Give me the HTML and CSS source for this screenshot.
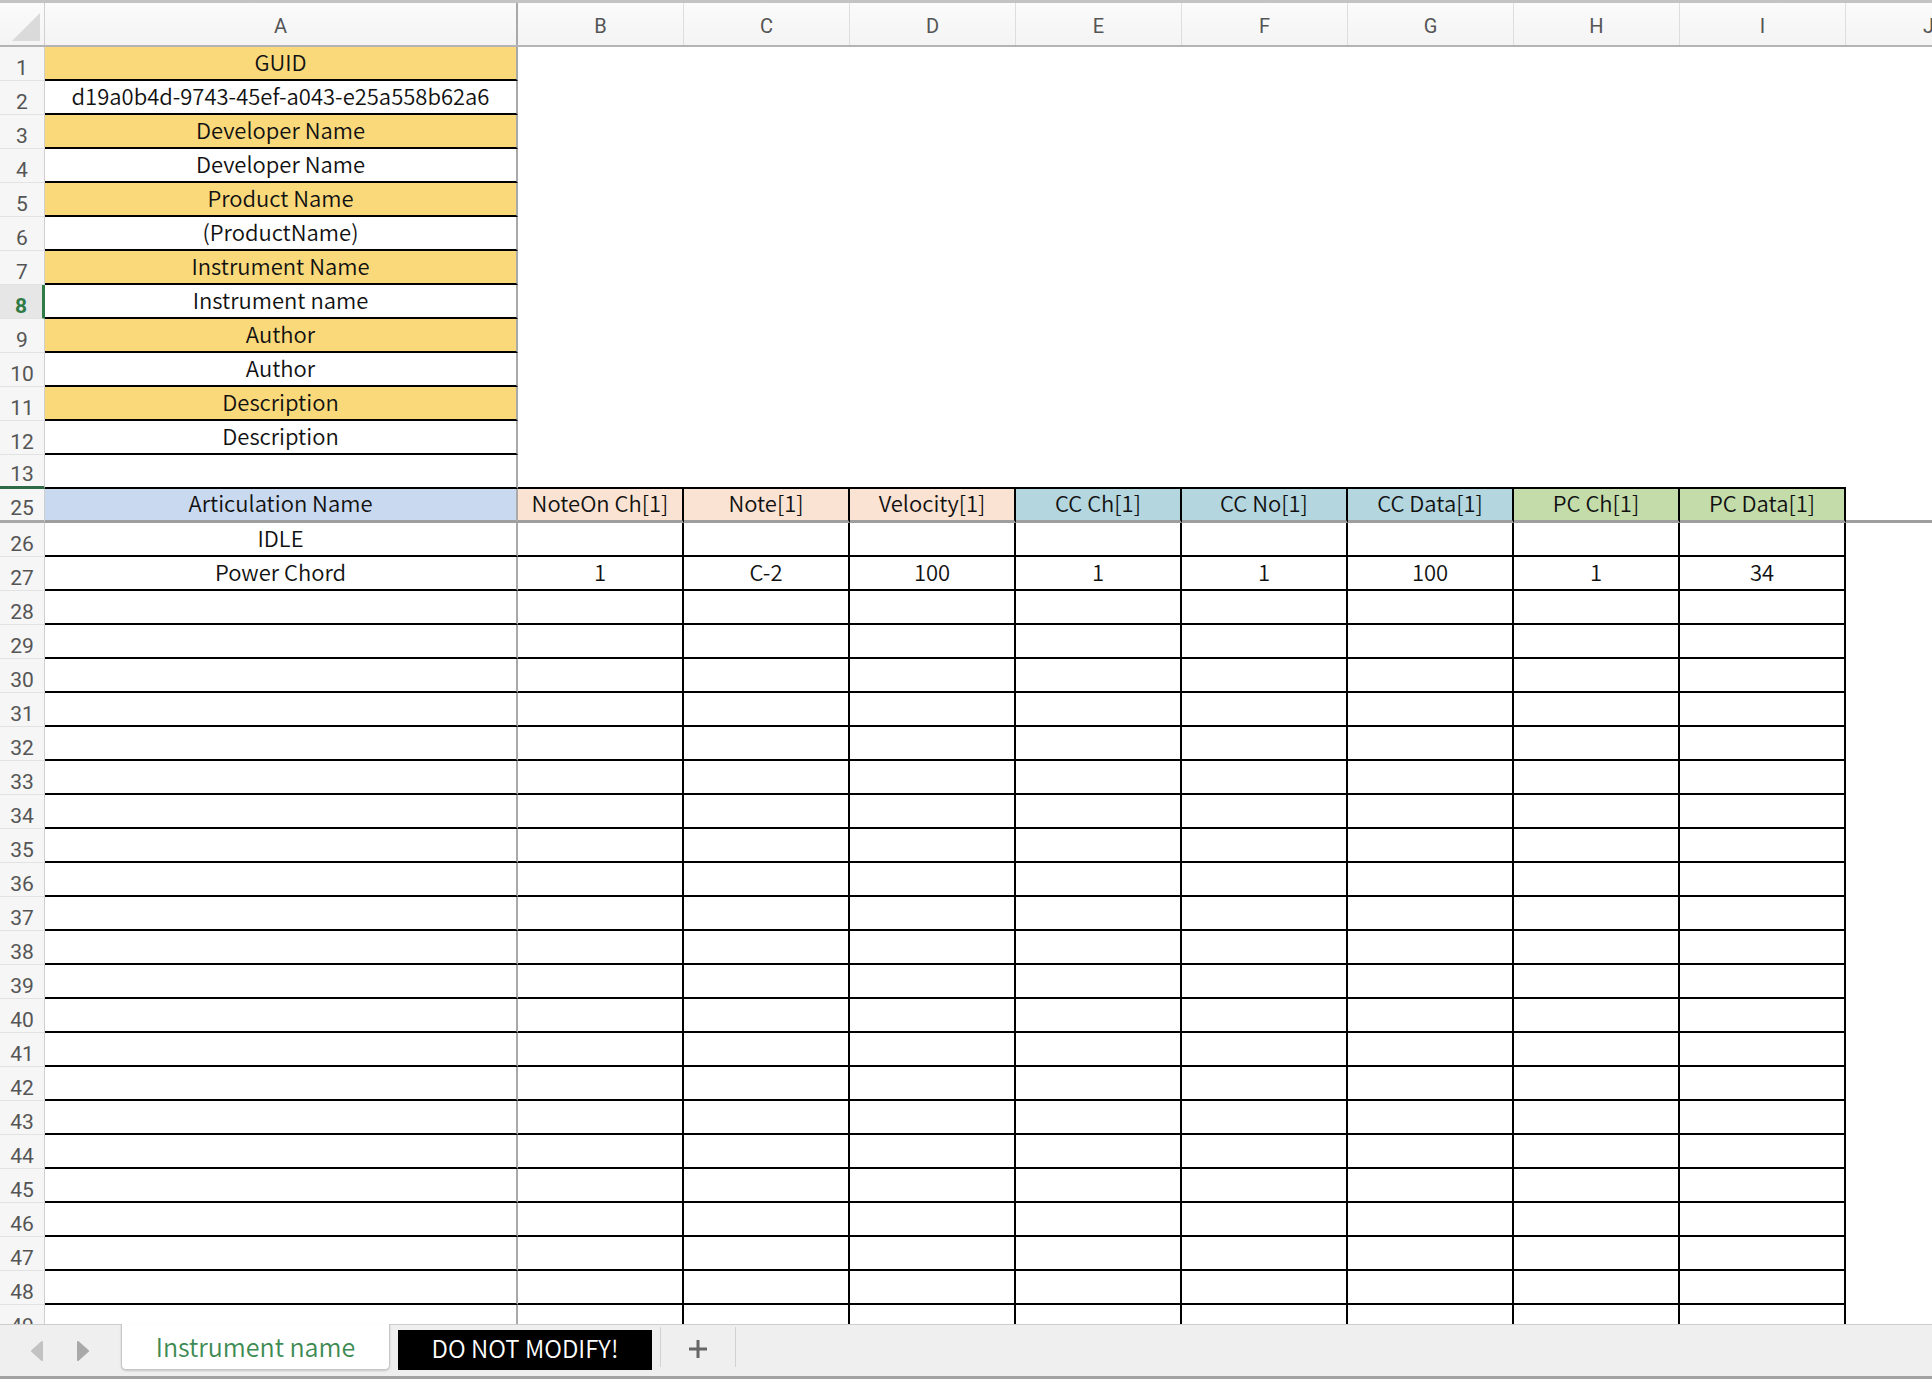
FILE: index.html
```html
<!DOCTYPE html>
<html lang="en">
<head>
<meta charset="utf-8">
<title>Instrument name</title>
<link rel="stylesheet" href="styles.css">
</head>
<body>
<div class="app">
  <div class="sheet">
    <div class="row colhead">
      <div class="corner"><svg width="34" height="34" viewBox="0 0 34 34"><polygon points="4,32 32,32 32,4" fill="#dadada"/></svg></div>
      <div class="ch cha">A</div>
      <div class="ch">B</div>
      <div class="ch">C</div>
      <div class="ch">D</div>
      <div class="ch">E</div>
      <div class="ch">F</div>
      <div class="ch">G</div>
      <div class="ch">H</div>
      <div class="ch">I</div>
      <div class="ch">J</div>
    </div>

    <div class="row"><div class="rh">1</div><div class="c ca y">GUID</div><div class="rest"></div></div>
    <div class="row"><div class="rh">2</div><div class="c ca">d19a0b4d-9743-45ef-a043-e25a558b62a6</div><div class="rest"></div></div>
    <div class="row"><div class="rh">3</div><div class="c ca y">Developer Name</div><div class="rest"></div></div>
    <div class="row"><div class="rh">4</div><div class="c ca">Developer Name</div><div class="rest"></div></div>
    <div class="row"><div class="rh">5</div><div class="c ca y">Product Name</div><div class="rest"></div></div>
    <div class="row"><div class="rh">6</div><div class="c ca">(ProductName)</div><div class="rest"></div></div>
    <div class="row"><div class="rh">7</div><div class="c ca y">Instrument Name</div><div class="rest"></div></div>
    <div class="row"><div class="rh rh-active">8</div><div class="c ca">Instrument name</div><div class="rest"></div></div>
    <div class="row"><div class="rh">9</div><div class="c ca y">Author</div><div class="rest"></div></div>
    <div class="row"><div class="rh">10</div><div class="c ca">Author</div><div class="rest"></div></div>
    <div class="row"><div class="rh">11</div><div class="c ca y">Description</div><div class="rest"></div></div>
    <div class="row"><div class="rh">12</div><div class="c ca">Description</div><div class="rest"></div></div>
    <div class="row r13"><div class="rh rh-hidden">13</div><div class="c ca"></div><div class="rest13"></div><div class="cj"></div></div>

    <div class="row r25">
      <div class="rh">25</div>
      <div class="c ca hb">Articulation Name</div>
      <div class="c cb hp">NoteOn Ch[1]</div>
      <div class="c cb hp">Note[1]</div>
      <div class="c cb hp">Velocity[1]</div>
      <div class="c cb hc">CC Ch[1]</div>
      <div class="c cb hc">CC No[1]</div>
      <div class="c cb hc">CC Data[1]</div>
      <div class="c cb hg">PC Ch[1]</div>
      <div class="c cb hg">PC Data[1]</div>
      <div class="cj"></div>
    </div>

    <div class="row t"><div class="rh">26</div><div class="c ca">IDLE</div><div class="c cb"></div><div class="c cb"></div><div class="c cb"></div><div class="c cb"></div><div class="c cb"></div><div class="c cb"></div><div class="c cb"></div><div class="c cb"></div><div class="cj"></div></div>
    <div class="row t"><div class="rh">27</div><div class="c ca">Power Chord</div><div class="c cb">1</div><div class="c cb">C-2</div><div class="c cb">100</div><div class="c cb">1</div><div class="c cb">1</div><div class="c cb">100</div><div class="c cb">1</div><div class="c cb">34</div><div class="cj"></div></div>
    <div class="row t"><div class="rh">28</div><div class="c ca"></div><div class="c cb"></div><div class="c cb"></div><div class="c cb"></div><div class="c cb"></div><div class="c cb"></div><div class="c cb"></div><div class="c cb"></div><div class="c cb"></div><div class="cj"></div></div>
    <div class="row t"><div class="rh">29</div><div class="c ca"></div><div class="c cb"></div><div class="c cb"></div><div class="c cb"></div><div class="c cb"></div><div class="c cb"></div><div class="c cb"></div><div class="c cb"></div><div class="c cb"></div><div class="cj"></div></div>
    <div class="row t"><div class="rh">30</div><div class="c ca"></div><div class="c cb"></div><div class="c cb"></div><div class="c cb"></div><div class="c cb"></div><div class="c cb"></div><div class="c cb"></div><div class="c cb"></div><div class="c cb"></div><div class="cj"></div></div>
    <div class="row t"><div class="rh">31</div><div class="c ca"></div><div class="c cb"></div><div class="c cb"></div><div class="c cb"></div><div class="c cb"></div><div class="c cb"></div><div class="c cb"></div><div class="c cb"></div><div class="c cb"></div><div class="cj"></div></div>
    <div class="row t"><div class="rh">32</div><div class="c ca"></div><div class="c cb"></div><div class="c cb"></div><div class="c cb"></div><div class="c cb"></div><div class="c cb"></div><div class="c cb"></div><div class="c cb"></div><div class="c cb"></div><div class="cj"></div></div>
    <div class="row t"><div class="rh">33</div><div class="c ca"></div><div class="c cb"></div><div class="c cb"></div><div class="c cb"></div><div class="c cb"></div><div class="c cb"></div><div class="c cb"></div><div class="c cb"></div><div class="c cb"></div><div class="cj"></div></div>
    <div class="row t"><div class="rh">34</div><div class="c ca"></div><div class="c cb"></div><div class="c cb"></div><div class="c cb"></div><div class="c cb"></div><div class="c cb"></div><div class="c cb"></div><div class="c cb"></div><div class="c cb"></div><div class="cj"></div></div>
    <div class="row t"><div class="rh">35</div><div class="c ca"></div><div class="c cb"></div><div class="c cb"></div><div class="c cb"></div><div class="c cb"></div><div class="c cb"></div><div class="c cb"></div><div class="c cb"></div><div class="c cb"></div><div class="cj"></div></div>
    <div class="row t"><div class="rh">36</div><div class="c ca"></div><div class="c cb"></div><div class="c cb"></div><div class="c cb"></div><div class="c cb"></div><div class="c cb"></div><div class="c cb"></div><div class="c cb"></div><div class="c cb"></div><div class="cj"></div></div>
    <div class="row t"><div class="rh">37</div><div class="c ca"></div><div class="c cb"></div><div class="c cb"></div><div class="c cb"></div><div class="c cb"></div><div class="c cb"></div><div class="c cb"></div><div class="c cb"></div><div class="c cb"></div><div class="cj"></div></div>
    <div class="row t"><div class="rh">38</div><div class="c ca"></div><div class="c cb"></div><div class="c cb"></div><div class="c cb"></div><div class="c cb"></div><div class="c cb"></div><div class="c cb"></div><div class="c cb"></div><div class="c cb"></div><div class="cj"></div></div>
    <div class="row t"><div class="rh">39</div><div class="c ca"></div><div class="c cb"></div><div class="c cb"></div><div class="c cb"></div><div class="c cb"></div><div class="c cb"></div><div class="c cb"></div><div class="c cb"></div><div class="c cb"></div><div class="cj"></div></div>
    <div class="row t"><div class="rh">40</div><div class="c ca"></div><div class="c cb"></div><div class="c cb"></div><div class="c cb"></div><div class="c cb"></div><div class="c cb"></div><div class="c cb"></div><div class="c cb"></div><div class="c cb"></div><div class="cj"></div></div>
    <div class="row t"><div class="rh">41</div><div class="c ca"></div><div class="c cb"></div><div class="c cb"></div><div class="c cb"></div><div class="c cb"></div><div class="c cb"></div><div class="c cb"></div><div class="c cb"></div><div class="c cb"></div><div class="cj"></div></div>
    <div class="row t"><div class="rh">42</div><div class="c ca"></div><div class="c cb"></div><div class="c cb"></div><div class="c cb"></div><div class="c cb"></div><div class="c cb"></div><div class="c cb"></div><div class="c cb"></div><div class="c cb"></div><div class="cj"></div></div>
    <div class="row t"><div class="rh">43</div><div class="c ca"></div><div class="c cb"></div><div class="c cb"></div><div class="c cb"></div><div class="c cb"></div><div class="c cb"></div><div class="c cb"></div><div class="c cb"></div><div class="c cb"></div><div class="cj"></div></div>
    <div class="row t"><div class="rh">44</div><div class="c ca"></div><div class="c cb"></div><div class="c cb"></div><div class="c cb"></div><div class="c cb"></div><div class="c cb"></div><div class="c cb"></div><div class="c cb"></div><div class="c cb"></div><div class="cj"></div></div>
    <div class="row t"><div class="rh">45</div><div class="c ca"></div><div class="c cb"></div><div class="c cb"></div><div class="c cb"></div><div class="c cb"></div><div class="c cb"></div><div class="c cb"></div><div class="c cb"></div><div class="c cb"></div><div class="cj"></div></div>
    <div class="row t"><div class="rh">46</div><div class="c ca"></div><div class="c cb"></div><div class="c cb"></div><div class="c cb"></div><div class="c cb"></div><div class="c cb"></div><div class="c cb"></div><div class="c cb"></div><div class="c cb"></div><div class="cj"></div></div>
    <div class="row t"><div class="rh">47</div><div class="c ca"></div><div class="c cb"></div><div class="c cb"></div><div class="c cb"></div><div class="c cb"></div><div class="c cb"></div><div class="c cb"></div><div class="c cb"></div><div class="c cb"></div><div class="cj"></div></div>
    <div class="row t"><div class="rh">48</div><div class="c ca"></div><div class="c cb"></div><div class="c cb"></div><div class="c cb"></div><div class="c cb"></div><div class="c cb"></div><div class="c cb"></div><div class="c cb"></div><div class="c cb"></div><div class="cj"></div></div>
    <div class="row t"><div class="rh">49</div><div class="c ca"></div><div class="c cb"></div><div class="c cb"></div><div class="c cb"></div><div class="c cb"></div><div class="c cb"></div><div class="c cb"></div><div class="c cb"></div><div class="c cb"></div><div class="cj"></div></div>
  </div>

  <div class="tabbar">
    <div class="navs">
      <svg class="nav" width="14" height="20" viewBox="0 0 14 20"><path d="M12 1 L2 10 L12 19 Z" fill="#c2c2c2" stroke="#c2c2c2" stroke-width="2" stroke-linejoin="round"/></svg>
      <svg class="nav" width="14" height="20" viewBox="0 0 14 20"><path d="M2 1 L12 10 L2 19 Z" fill="#a9a9a9" stroke="#a9a9a9" stroke-width="2" stroke-linejoin="round"/></svg>
    </div>
    <div class="tab tab-active">Instrument name</div>
    <div class="tab tab-black">DO NOT MODIFY!</div>
    <div class="sep sep-first"></div>
    <div class="add"><svg width="22" height="22" viewBox="0 0 22 22"><path d="M11 2 V20 M2 11 H20" stroke="#666" stroke-width="3"/></svg></div>
    <div class="sep"></div>
  </div>
  <div class="bottomline"></div>
</div>
</body>
</html>
```

FILE: styles.css
```css
* { box-sizing: border-box; }
html, body { margin: 0; padding: 0; background: #fff; }
body { width: 1932px; height: 1382px; overflow: hidden; }

.app { width: 1932px; height: 1382px; display: flex; flex-direction: column; overflow: hidden; }

.sheet {
  height: 1324px;
  overflow: hidden;
  flex: none;
  font-family: "Noto Sans CJK JP", "Noto Sans", sans-serif;
}

.row {
  display: grid;
  grid-template-columns: 45px 473px repeat(9, 166px);
  height: 34px;
  width: 2012px;
}

/* column header */
.colhead {
  height: 47px;
  border-top: 3px solid #c3c3c3;
  background: linear-gradient(#fbfbfb, #f4f4f4);
  border-bottom: 2px solid #b4b4b4;
}
.corner {
  border-right: 1px solid #d0d0d0;
  display: flex;
  align-items: flex-end;
  justify-content: flex-end;
  padding: 0 2px 2px 0;
}
.corner svg { display: block; }
.ch {
  display: flex;
  align-items: center;
  justify-content: center;
  font-family: Roboto, "Liberation Sans", sans-serif;
  font-size: 20px;
  line-height: 1.1;
  color: #555;
  border-right: 1px solid #dedede;
  padding-top: 3px;
}
.ch.cha { border-right: 2px solid #a9a9a9; }

/* row header */
.rh {
  background: #f6f6f6;
  border-right: 1px solid #cfcfcf;
  border-bottom: 1px solid #e2e2e2;
  color: #555;
  font-family: Roboto, "Liberation Sans", sans-serif;
  font-size: 21px;
  line-height: 1;
  display: flex;
  align-items: flex-end;
  justify-content: center;
  padding-bottom: 1px;
}
.rh-active {
  background: #e6e6e6;
  color: #2f7a47;
  font-weight: 700;
  border-right: 3px solid #2f7a47;
}
.rh-hidden { border-bottom: 3px solid #2d6a45; }

/* cells */
.c {
  display: flex;
  align-items: center;
  justify-content: center;
  font-size: 22px;
  line-height: 1.1;
  font-weight: 350;
  color: #111;
  white-space: nowrap;
  padding-bottom: 4px;
}
.ca {
  border-right: 2px solid #a9a9a9;
  border-bottom: 2px solid #000;
}
.y { background: #fad97b; }
.rest13 {
  grid-column: 3 / 11;
  border-bottom: 2px solid #000;
}

.cb {
  border-right: 2px solid #000;
  border-bottom: 2px solid #000;
}

.r25 .c,
.r25 .rh,
.r25 .cj { border-bottom: 3px solid #9e9e9e; }
.r25 .rh { border-bottom-color: #a8a8a8; }

.hb { background: #c9daf0; }
.hp { background: #fbe3d3; }
.hc { background: #b3d6df; }
.hg { background: #c3dcaa; }

/* tab bar */
.tabbar {
  height: 52px;
  flex: none;
  background: #efefef;
  border-top: 1px solid #cdcdcd;
  display: flex;
  align-items: flex-start;
  font-family: "Noto Sans CJK JP", "Noto Sans", sans-serif;
  font-weight: 350;
}
.navs {
  width: 121px;
  height: 52px;
  display: flex;
  align-items: center;
  padding-left: 30px;
  gap: 32px;
}
.nav { display: block; }
.tab-active {
  margin-top: -1px;
  width: 269px;
  height: 46px;
  background: #fff;
  border: 1px solid #c6c6c6;
  border-top: none;
  border-radius: 0 0 5px 5px;
  box-shadow: 0 1px 2px rgba(0,0,0,0.18);
  color: #3d8a53;
  font-size: 25px;
  line-height: 1.2;
  display: flex;
  align-items: center;
  justify-content: center;
  padding-bottom: 2px;
}
.tab-black {
  margin-left: 8px;
  margin-top: 5px;
  width: 254px;
  height: 40px;
  background: #000;
  color: #fff;
  font-size: 24px;
  line-height: 1.2;
  display: flex;
  align-items: center;
  justify-content: center;
  padding-bottom: 3px;
}
.sep {
  width: 1px;
  height: 40px;
  margin-top: 2px;
  background: #d2d2d2;
}
.sep-first { margin-left: 8px; }
.add {
  width: 74px;
  height: 48px;
  display: flex;
  align-items: center;
  justify-content: center;
}
.add svg { display: block; }
.bottomline {
  flex: none;
  height: 3px;
  background: #a2a2a2;
}
```
